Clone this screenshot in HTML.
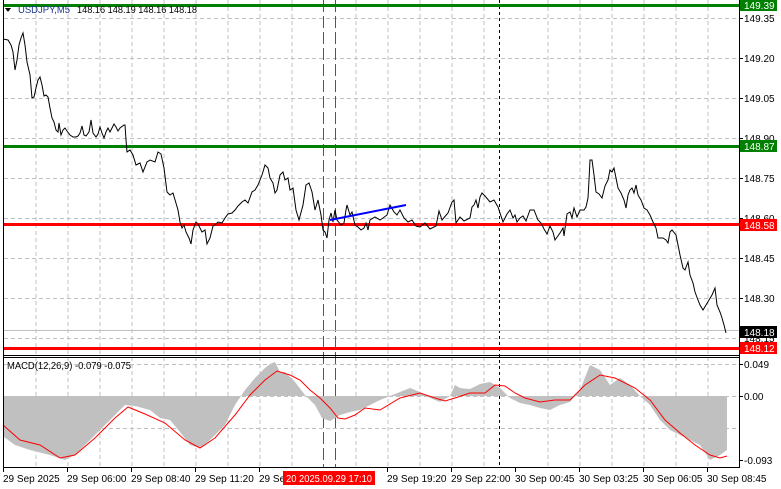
<!DOCTYPE html>
<html><head><meta charset="utf-8"><style>
html,body{margin:0;padding:0;background:#fff;}
body{width:781px;height:489px;overflow:hidden;position:relative;font-family:"Liberation Sans",sans-serif;}
svg{position:absolute;left:0;top:0;}
text{font-family:"Liberation Sans",sans-serif;font-size:10px;}
</style></head><body>
<svg width="781" height="489" viewBox="0 0 781 489" xmlns="http://www.w3.org/2000/svg" shape-rendering="crispEdges">
<rect width="781" height="489" fill="#fff"/>
<g stroke="#c0c0c0" stroke-dasharray="4,3" stroke-width="1">
<path d="M36 0V355M68 0V355M100 0V355M132 0V355M164 0V355M196 0V355M228 0V355M260 0V355M292 0V355M356 0V355M388 0V355M420 0V355M452 0V355M484 0V355M548 0V355M580 0V355M612 0V355M644 0V355M676 0V355M708 0V355"/>
<path d="M4 18.5H739M4 58.5H739M4 98.5H739M4 138.5H739M4 178.5H739M4 218.5H739M4 258.5H739M4 298.5H739M4 338.5H739"/>
<path d="M36 357V468M68 357V468M100 357V468M132 357V468M164 357V468M196 357V468M228 357V468M260 357V468M292 357V468M356 357V468M388 357V468M420 357V468M452 357V468M484 357V468M548 357V468M580 357V468M612 357V468M644 357V468M676 357V468M708 357V468"/>
<path d="M4 364.5H739M4 396.5H739M4 428.5H739"/>
</g>
<path d="M499.5 0V468" stroke="#000" stroke-dasharray="3,3"/>
<path d="M323.5 0V468" stroke="#d02020" stroke-dasharray="12,4"/>
<path d="M335.5 0V468" stroke="#d02020" stroke-dasharray="12,4"/>
<path d="M4 330.5H739" stroke="#c0c0c0"/>
<rect x="4" y="4" width="735" height="3" fill="#008000"/>
<rect x="4" y="145" width="735" height="3" fill="#008000"/>
<rect x="4" y="223" width="735" height="3" fill="#ff0000"/>
<rect x="4" y="347" width="735" height="3" fill="#ff0000"/>
<polyline fill="none" stroke="#000" stroke-width="1" shape-rendering="auto" points="3,39 8,40 11,45 13,52 15,70 17,60 19,45 21,38 23,33 25,45 27,62 30,75 32,98 34,97 36,88 38,80 40,77 42,85 44,96 46,95 48,97 50,108 52,118 54,122 56,130 58,132 59,123 61,135 63,130 65,128 67,131 70,135 73,137 76,137 78,136 80,133 82,126 84,135 86,136 89,132 91,120 93,133 96,137 98,134 100,127 102,133 104,138 106,132 108,128 110,132 112,128 114,124 116,127 118,131 120,128 124,125 125,125 126,140 127,152 130,150 133,155 136,165 140,163 143,172 147,162 150,160 155,162 158,152 161,154 164,168 167,192 170,195 173,193 178,210 180,222 182,228 184,225 186,232 189,238 191,244 193,230 196,222 198,224 202,232 205,230 207,244 210,238 213,226 215,225 218,222 222,223 225,218 228,214 232,213 235,210 238,206 242,202 245,200 248,203 252,192 255,190 258,185 262,175 265,165 268,168 270,178 273,183 275,193 277,190 280,175 283,172 285,180 288,178 290,190 293,188 296,210 299,220 303,205 306,185 309,183 312,192 315,210 318,200 321,215 323,230 325,232 327,238 329,220 331,213 333,222 335,210 337,220 341,225 344,223 346,210 347,205 350,215 352,212 355,225 358,227 361,230 364,228 366,223 368,230 370,220 375,217 380,220 383,218 387,215 390,205 394,212 397,215 400,210 404,218 408,222 412,220 416,226 420,227 425,223 430,229 436,226 439,211 442,220 448,213 452,202 454,200 456,223 460,217 464,221 470,218 472,207 474,205 476,200 478,208 480,197 482,193 485,196 490,202 494,200 498,207 500,213 503,222 507,214 510,210 513,218 515,215 517,222 520,218 523,216 526,221 530,210 534,210 538,220 541,223 544,229 547,234 550,226 553,232 555,240 560,233 563,228 564,236 567,214 570,212 572,218 574,208 577,217 580,210 584,210 586,207 588,198 589,180 590,160 592,160 594,175 596,192 599,194 602,198 605,186 608,180 610,170 612,172 614,168 616,178 618,188 621,193 624,200 626,208 628,195 630,190 632,188 634,193 636,185 638,195 641,200 644,208 647,210 650,215 653,222 656,228 658,238 660,238 663,238 666,240 668,243 670,232 672,230 676,235 678,245 680,255 683,268 685,270 688,262 690,275 693,283 695,292 698,300 700,305 703,310 706,305 709,300 712,295 715,288 717,305 720,312 722,318 724,325 726,333"/>
<line x1="330" y1="220" x2="406" y2="205" stroke="#0000ff" stroke-width="2" shape-rendering="auto"/>
<polygon fill="#c0c0c0" stroke="none" shape-rendering="auto" points="4,396 4,437 15,445 30,450 50,455 65,460 75,455 90,440 110,420 125,405 135,406 150,410 160,418 170,420 180,432 190,445 200,448 210,440 225,425 235,405 245,390 255,378 265,368 270,364 275,362 280,372 285,372 295,382 305,395 315,405 322,418 330,421 340,415 350,412 360,410 370,405 380,400 390,396 400,392 410,388 420,392 430,398 440,402 450,396 455,385 460,388 470,389 480,384 490,382 500,388 510,398 520,403 530,405 540,408 550,410 560,405 570,402 580,390 590,365 600,370 610,385 620,378 630,385 640,396 650,405 660,420 670,430 680,435 690,440 700,445 710,460 720,455 727,450 727,396"/>
<polyline fill="none" stroke="#ff0000" stroke-width="1" shape-rendering="auto" points="3,425 20,440 40,445 60,458 75,455 95,438 115,418 128,407 145,414 165,423 185,440 200,448 215,438 235,415 250,395 265,380 277,371 290,375 300,380 310,390 320,398 330,408 338,418 345,419 355,415 365,408 380,410 400,398 420,393 435,398 445,401 455,398 470,393 485,393 495,385 505,386 515,393 525,398 540,402 555,400 570,400 585,385 600,375 615,378 635,388 650,400 665,420 680,433 695,445 710,455 720,458 727,456"/>
<g stroke="#000" fill="none">
<path d="M3.5 0V468M739.5 0V468M3 355.5H740M3 357.5H740M3 467.5H740"/>
</g>
<g stroke="#000"><path d="M739 18.5h4M739 58.5h4M739 98.5h4M739 138.5h4M739 178.5h4M739 218.5h4M739 258.5h4M739 298.5h4M739 364.5h4M739 396.5h4M739 460.5h4"/></g>
<g fill="#000">
<text x="744" y="22">149.35</text><text x="744" y="62">149.20</text><text x="744" y="102">149.05</text><text x="744" y="142">148.90</text>
<text x="744" y="182">148.75</text><text x="744" y="222">148.60</text><text x="744" y="262">148.45</text><text x="744" y="302">148.30</text>
<text x="744" y="342">148.15</text>
<text x="744" y="368">0.049</text><text x="744" y="400">0.00</text><text x="744" y="464">-0.093</text>
</g>
<rect x="740" y="0" width="37" height="11" fill="#008000"/><text x="744" y="9" fill="#fff">149.39</text>
<rect x="740" y="140" width="37" height="12" fill="#008000"/><text x="744" y="150" fill="#fff">148.87</text>
<rect x="740" y="219" width="37" height="12" fill="#ff0000"/><text x="744" y="229" fill="#fff">148.58</text>
<rect x="740" y="326" width="37" height="12" fill="#000"/><text x="744" y="336" fill="#fff">148.18</text>
<rect x="740" y="342" width="37" height="12" fill="#ff0000"/><text x="744" y="352" fill="#fff">148.12</text>
<g stroke="#000"><path d="M3.5 468v4M67.5 468v4M131.5 468v4M195.5 468v4M259.5 468v4M387.5 468v4M451.5 468v4M515.5 468v4M579.5 468v4M643.5 468v4M707.5 468v4"/></g>
<g fill="#000">
<text x="3" y="482">29 Sep 2025</text><text x="67" y="482">29 Sep 06:00</text><text x="131" y="482">29 Sep 08:40</text><text x="195" y="482">29 Sep 11:20</text>
<text x="259" y="482">29 Sep</text><text x="387" y="482">29 Sep 19:20</text><text x="451" y="482">29 Sep 22:00</text><text x="515" y="482">30 Sep 00:45</text>
<text x="579" y="482">30 Sep 03:25</text><text x="643" y="482">30 Sep 06:05</text><text x="707" y="482">30 Sep 08:45</text>
</g>
<rect x="283" y="471" width="92" height="14" fill="#ff0000"/>
<text x="286" y="482" fill="#fff" textLength="86" lengthAdjust="spacingAndGlyphs">20 2025.09.29 17:10</text>
<polygon points="5,8 11,8 8,12" fill="#000"/>
<text x="18" y="13" fill="#1a3a8a" textLength="52" lengthAdjust="spacingAndGlyphs">USDJPY,M5</text>
<text x="77" y="13" fill="#000" textLength="120" lengthAdjust="spacingAndGlyphs">148.16 148.19 148.16 148.18</text>
<text x="7" y="369" fill="#000" textLength="124" lengthAdjust="spacingAndGlyphs">MACD(12,26,9) -0.079 -0.075</text>
</svg>
</body></html>
